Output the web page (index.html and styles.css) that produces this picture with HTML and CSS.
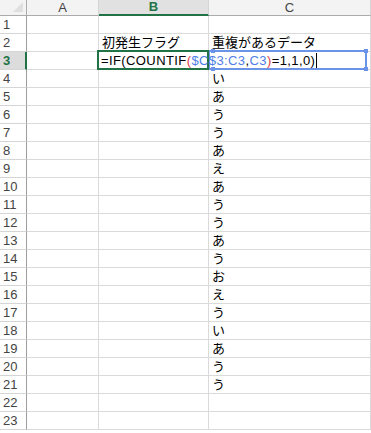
FILE: index.html
```html
<!DOCTYPE html>
<html lang="ja">
<head>
    <meta charset="UTF-8">
    <title>初発生フラグ</title>
    <link rel="stylesheet" href="styles.css">
</head>
<body>
    <div class="sheet">
        <div class="corner"></div>
        <div class="col-head">A</div>
        <div class="col-head selected">B</div>
        <div class="col-head">C</div>

        <div class="row-head">1</div><div class="cell"></div><div class="cell"></div><div class="cell"></div>
        <div class="row-head">2</div><div class="cell"></div><div class="cell">初発生フラグ</div><div class="cell">重複があるデータ</div>
        <div class="row-head selected">3</div><div class="cell"></div>
        <div class="cell active">
            <span class="formula">=IF(COUNTIF<span class="paren">(</span><span class="ref">$C$3:C3</span>,<span class="ref">C3</span><span class="paren">)</span>=1,1,0)<span class="caret"></span></span>
        </div>
        <div class="cell range">
            <i class="handle tl"></i><i class="handle tr"></i><i class="handle bl"></i><i class="handle br"></i>
        </div>
        <div class="row-head">4</div><div class="cell"></div><div class="cell"></div><div class="cell">い</div>
        <div class="row-head">5</div><div class="cell"></div><div class="cell"></div><div class="cell">あ</div>
        <div class="row-head">6</div><div class="cell"></div><div class="cell"></div><div class="cell">う</div>
        <div class="row-head">7</div><div class="cell"></div><div class="cell"></div><div class="cell">う</div>
        <div class="row-head">8</div><div class="cell"></div><div class="cell"></div><div class="cell">あ</div>
        <div class="row-head">9</div><div class="cell"></div><div class="cell"></div><div class="cell">え</div>
        <div class="row-head">10</div><div class="cell"></div><div class="cell"></div><div class="cell">あ</div>
        <div class="row-head">11</div><div class="cell"></div><div class="cell"></div><div class="cell">う</div>
        <div class="row-head">12</div><div class="cell"></div><div class="cell"></div><div class="cell">う</div>
        <div class="row-head">13</div><div class="cell"></div><div class="cell"></div><div class="cell">あ</div>
        <div class="row-head">14</div><div class="cell"></div><div class="cell"></div><div class="cell">う</div>
        <div class="row-head">15</div><div class="cell"></div><div class="cell"></div><div class="cell">お</div>
        <div class="row-head">16</div><div class="cell"></div><div class="cell"></div><div class="cell">え</div>
        <div class="row-head">17</div><div class="cell"></div><div class="cell"></div><div class="cell">う</div>
        <div class="row-head">18</div><div class="cell"></div><div class="cell"></div><div class="cell">い</div>
        <div class="row-head">19</div><div class="cell"></div><div class="cell"></div><div class="cell">あ</div>
        <div class="row-head">20</div><div class="cell"></div><div class="cell"></div><div class="cell">う</div>
        <div class="row-head">21</div><div class="cell"></div><div class="cell"></div><div class="cell">う</div>
        <div class="row-head">22</div><div class="cell"></div><div class="cell"></div><div class="cell"></div>
        <div class="row-head">23</div><div class="cell"></div><div class="cell"></div><div class="cell"></div>
    </div>
</body>
</html>
```

FILE: styles.css
```css
body {
    margin: 0;
    padding: 0;
    background: #fff;
    font-family: "Liberation Sans", "Noto Sans CJK JP", sans-serif;
    font-size: 13px;
    color: #000;
}

.sheet {
    display: grid;
    grid-template-columns: 27px 72px 110px 162px;
    grid-template-rows: 16px;
    grid-auto-rows: 18px;
}

.corner {
    position: relative;
    background: #f3f3f3;
    border-right: 1px solid #ababab;
    border-bottom: 1px solid #ababab;
}
.corner::after {
    content: "";
    position: absolute;
    right: 3px;
    bottom: 3px;
    border-left: 10px solid transparent;
    border-bottom: 10px solid #dfdfdf;
}

.col-head {
    background: #f3f3f3;
    color: #444;
    text-align: center;
    line-height: 15px;
    border-right: 1px solid #d5d5d5;
    border-bottom: 1px solid #ababab;
}
.col-head.selected {
    background: #e1e1e1;
    color: #217346;
    font-weight: bold;
    border-bottom: 2px solid #217346;
    line-height: 14px;
}

.row-head {
    background: #fff;
    color: #444;
    padding-left: 3px;
    line-height: 18px;
    border-right: 1px solid #9e9e9e;
    border-bottom: 1px solid #d5d5d5;
}
.row-head.selected {
    background: #dcdcdc;
    color: #217346;
    font-weight: bold;
    border-right: 2px solid #217346;
}

.cell {
    position: relative;
    padding: 0 3px;
    line-height: 18px;
    white-space: nowrap;
    border-right: 1px solid #dadada;
    border-bottom: 1px solid #dadada;
}

.cell.active {
    z-index: 2;
    overflow: visible;
    padding-left: 2px;
}
.cell.active::after {
    content: "";
    position: absolute;
    left: -2px;
    top: -2px;
    right: -1px;
    bottom: -1px;
    border: 2px solid #217346;
}

.formula {
    position: relative;
    z-index: 3;
    letter-spacing: 0.4px;
}
.paren {
    color: #e0404a;
}
.ref {
    color: #4f7fe6;
}
.caret {
    display: inline-block;
    width: 0;
    height: 15px;
    margin-left: 1px;
    vertical-align: -3px;
    border-left: 1px solid #000;
}

.cell.range::after {
    content: "";
    position: absolute;
    left: -1px;
    top: -2px;
    right: 3px;
    bottom: -1px;
    border: 2px solid #6b93e8;
}
.handle {
    position: absolute;
    z-index: 4;
    width: 4px;
    height: 4px;
    background: #6b93e8;
}
.handle.tl { left: 2px; top: -3px; }
.handle.tr { right: 2px; top: -3px; }
.handle.bl { left: 2px; bottom: -2px; }
.handle.br { right: 2px; bottom: -2px; }
```
